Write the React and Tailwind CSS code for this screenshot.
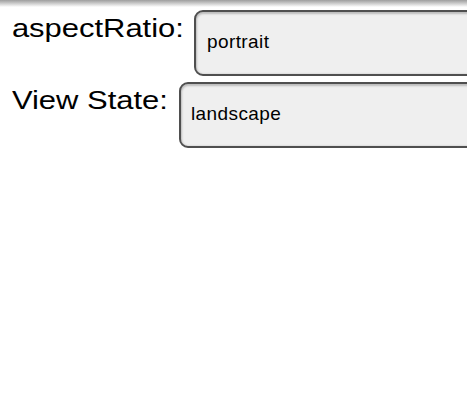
export default function App() {
  const box =
    "shrink-0 w-[320px] h-[66px] flex items-start pt-[19px] rounded-[9px] border-2 border-[#4f4f4f] bg-[#efefef] shadow-[inset_0_1px_2px_1px_#bcbcbc] text-[19px] leading-[22px] tracking-[0.4px] text-black";
  const label =
    "inline-block mt-[3px] pl-[10px] text-[26px] leading-[30px] whitespace-nowrap origin-left scale-x-[1.19]";
  return (
    <div
      className="w-[467px] h-[401px] overflow-hidden bg-white text-black"
      style={{ fontFamily: '"Liberation Sans", Arial, sans-serif' }}
    >
      <div className="h-[7px] bg-gradient-to-b from-[#9e9e9e] to-white" />
      <div className="mt-[3px] flex flex-col gap-[6px]">
        <div className="flex items-start">
          <div className="w-[194px] shrink-0">
            <span className={label}>aspectRatio:</span>
          </div>
          <div className={box + " pl-[11px]"}>portrait</div>
        </div>
        <div className="flex items-start">
          <div className="w-[179px] shrink-0">
            <span className={label}>View State:</span>
          </div>
          <div className={box + " pl-[10px]"}>landscape</div>
        </div>
      </div>
    </div>
  );
}
